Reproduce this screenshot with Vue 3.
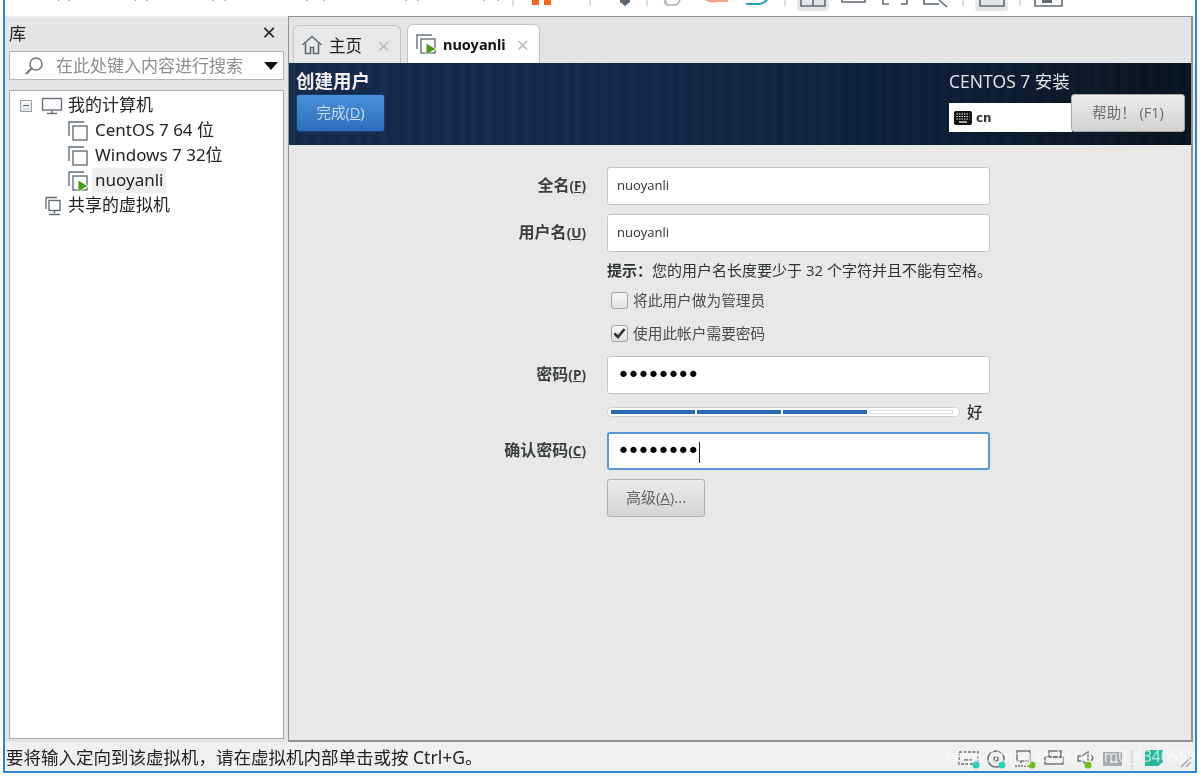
<template>
  <div class="window">
    <div class="toolbar">
      <div class="menus">
        <span v-for="m in menus" :key="m">{{ m }}</span>
      </div>
      <svg class="tools" width="600" height="16" viewBox="0 0 600 16">
        <g stroke="#b9bdc2" stroke-width="1">
          <path d="M18 0v6M95 0v6M152 0v6M290 0v6M468 0v6M525 0v6" />
        </g>
        <rect x="37" y="0" width="7" height="5" fill="#ef6a1f" />
        <rect x="49" y="0" width="7" height="5" fill="#ef6a1f" />
        <path d="M125 0h10v2l-5 4-5-4z" fill="#5b6670" />
        <path d="M170 0v2c0 2 1 3 3 3h6c3 0 5-2 6-5" fill="none" stroke="#a9aeb3" stroke-width="1.5" />
        <path d="M170 0l2 3" stroke="#e8a48a" stroke-width="1.5" />
        <path d="M210 0c2 2 6 3 12 2h11V0z" fill="#f2a484" />
        <path d="M250 3h12c4 0 7-1 8-3h3c-2 3-6 5-11 5h-10z" fill="#22a0c0" />
        <rect x="302" y="0" width="32" height="11" rx="3" fill="#e3e6ea" />
        <path d="M306 0v6h24V0M318 0v6" fill="none" stroke="#5f6b76" stroke-width="1.6" />
        <path d="M347 0v2h23V0" fill="none" stroke="#5f6b76" stroke-width="1.6" />
        <path d="M388 0v4h6M412 0v4h-6" fill="none" stroke="#5f6b76" stroke-width="1.6" />
        <path d="M429 0v4h15M444 0l8 7" fill="none" stroke="#5f6b76" stroke-width="1.6" />
        <rect x="480" y="0" width="33" height="11" rx="3" fill="#e3e6ea" />
        <path d="M485 0v6h24V0" fill="none" stroke="#5f6b76" stroke-width="1.6" />
        <path d="M540 0v6h27V0" fill="none" stroke="#5f6b76" stroke-width="1.6" />
        <rect x="547" y="0" width="10" height="3" fill="#5f6b76" />
      </svg>
    </div>

    <div class="body">
      <aside class="library">
        <div class="lib-head">
          <span>库</span>
          <span class="lib-close">×</span>
        </div>
        <div class="search">
          <svg width="20" height="20" viewBox="0 0 20 20" fill="none" stroke="#6d747b" stroke-width="1.5">
            <circle cx="12" cy="8" r="6" />
            <path d="M7.5 12.5L2 18" stroke-width="2" />
          </svg>
          <span class="search-text">在此处键入内容进行搜索</span>
          <span class="search-arrow"></span>
        </div>
        <div class="tree">
          <div class="tree-row">
            <span class="collapse"></span>
            <svg class="pc" width="22" height="18" viewBox="0 0 22 18" fill="none" stroke="#66707a" stroke-width="1.4">
              <rect x="1.5" y="1.5" width="19" height="11.5" />
              <path d="M11 13v3M6 16.5h10" />
            </svg>
            <span class="zh">我的计算机</span>
          </div>
          <div v-for="vm in vms" :key="vm.name" class="tree-row vm-row">
            <svg width="22" height="22" viewBox="0 0 22 22" fill="none" stroke="#66707a" stroke-width="1.4">
              <path d="M2 16V2h15" />
              <rect x="6" y="6" width="14" height="14" />
              <path v-if="vm.running" d="M11 10l10 6-10 6z" fill="#4a9a1e" stroke="#fff" stroke-width=".8" />
            </svg>
            <span :class="{ selected: vm.running }">{{ vm.name }}</span>
          </div>
          <div class="tree-row">
            <svg class="shared" width="18" height="20" viewBox="0 0 18 20" fill="none" stroke="#66707a" stroke-width="1.4">
              <path d="M2 13V1.5h11" />
              <rect x="5" y="4.5" width="11" height="10" />
              <path d="M10.500 14.500v3M5 18.500h11" />
            </svg>
            <span class="zh">共享的虚拟机</span>
          </div>
        </div>
      </aside>

      <main class="main">
        <div class="tabs">
          <div class="tab">
            <svg width="22" height="20" viewBox="0 0 22 20" fill="none" stroke="#606b75" stroke-width="1.6">
              <path d="M1.500 10L11 1.500 20.500 10" />
              <path d="M4.500 8v10.500h5v-6h3v6h5V8" />
            </svg>
            <span class="tab-name">主页</span>
            <span class="tab-close">×</span>
          </div>
          <div class="tab active">
            <svg width="22" height="22" viewBox="0 0 22 22" fill="none" stroke="#66707a" stroke-width="1.4">
              <path d="M2 16V2h15" />
              <rect x="6" y="6" width="14" height="14" />
              <path d="M11 10l10 6-10 6z" fill="#4a9a1e" stroke="#fff" stroke-width=".8" />
            </svg>
            <span class="tab-name bold">nuoyanli</span>
            <span class="tab-close">×</span>
          </div>
        </div>

        <div class="vm-screen">
          <header class="anaconda">
            <div class="hd-left">
              <div class="hd-title">创建用户</div>
              <button class="done">完成(<u>D</u>)</button>
            </div>
            <div class="hd-right">
              <div class="hd-product">CENTOS 7 安装</div>
              <div class="hd-controls">
                <div class="kb">
                  <svg width="18" height="14" viewBox="0 0 18 14">
                    <rect width="18" height="14" rx="2" fill="#111" />
                    <path d="M2.500 3h13M2.500 5.500h13M2.500 8h13" stroke="#eee" stroke-width="1.200" stroke-dasharray="1.500 1" />
                    <path d="M5 11h8" stroke="#eee" stroke-width="1.400" />
                  </svg>
                  <span>cn</span>
                </div>
                <button class="help">帮助！ (F1)</button>
              </div>
            </div>
          </header>

          <form class="form" @submit.prevent>
            <label class="lbl">全名<span class="mn">(<u>F</u>)</span></label>
            <div class="field">nuoyanli</div>

            <label class="lbl mt10">用户名<span class="mn">(<u>U</u>)</span></label>
            <div class="field mt10">nuoyanli</div>

            <div class="hint"><b>提示：</b>您的用户名长度要少于 32 个字符并且不能有空格。</div>

            <div class="check first">
              <span class="box"></span>
              <span>将此用户做为管理员</span>
            </div>
            <div class="check second">
              <span class="box">
                <svg width="15" height="15" viewBox="0 0 15 15" fill="none" stroke="#2e3436" stroke-width="2.600">
                  <path d="M2.500 7.500l3.500 3.500 6.500-8" />
                </svg>
              </span>
              <span>使用此帐户需要密码</span>
            </div>

            <label class="lbl pw-top">密码<span class="mn">(<u>P</u>)</span></label>
            <div class="field dots pw-top">••••••••</div>

            <div class="strength">
              <div class="track">
                <span v-for="n in 4" :key="n" class="seg" :class="{ on: n < 4 }"></span>
              </div>
              <span class="strength-text">好</span>
            </div>

            <label class="lbl confirm-top">确认密码<span class="mn">(<u>C</u>)</span></label>
            <div class="field dots focus confirm-top">••••••••<i class="caret"></i></div>

            <button class="advanced">高级(<u>A</u>)...</button>
          </form>
        </div>
      </main>
    </div>

    <footer class="status">
      <span class="status-text">要将输入定向到该虚拟机，请在虚拟机内部单击或按 Ctrl+G。</span>
      <svg class="tray" width="240" height="24" viewBox="0 0 240 24" fill="none" stroke="#656e76" stroke-width="1.400">
        <rect x="4" y="4" width="19" height="12" stroke-dasharray="3 1.500" />
        <path d="M8 12h9" />
        <circle cx="21" cy="17" r="3.500" fill="#2fd3b8" stroke="none" />
        <circle cx="41" cy="11" r="8" />
        <circle cx="41" cy="11" r="2" />
        <circle cx="47" cy="17" r="3.500" fill="#2fd3b8" stroke="none" />
        <rect x="62" y="3" width="13" height="10" />
        <path d="M66 13v3M60 18h16" stroke-dasharray="2 1" />
        <circle cx="77" cy="17" r="3.500" fill="#6cc11e" stroke="none" />
        <rect x="94" y="3" width="12" height="6" />
        <rect x="90" y="9" width="18" height="7" />
        <path d="M123 8h4l6-4v13l-6-4h-4z" />
        <path d="M136 7l2 3-2 3" />
        <circle cx="133" cy="17" r="3.500" fill="#6cc11e" stroke="none" />
        <rect x="148" y="4" width="19" height="14" fill="#a4abb2" stroke="none" />
        <path d="M155 14h8" stroke="#eee" />
        <path d="M177 2v20" stroke="#c4c7ca" stroke-width="1" />
        <path d="M190 2h18v12l-5 4h-13z" fill="#25b89f" stroke="none" />
        <path d="M226 19l10-10M231 19l5-5" stroke="#a3a7aa" stroke-width="1.500" />
      </svg>
      <span class="watermark">https://blog.csdn.net/m0_43405589</span>
    </footer>
  </div>
</template>

<script setup>
const menus = ['文件(F)', '编辑(E)', '查看(V)', '虚拟机(M)', '选项卡(T)', '帮助(H)']

const vms = [
  { name: 'CentOS 7 64 位', running: false },
  { name: 'Windows 7 32位', running: false },
  { name: 'nuoyanli', running: true },
]
</script>

<style>
html, body {
  margin: 0;
  background: #fff;
}
</style>

<style scoped>
.window {
  box-sizing: border-box;
  width: 1194px;
  height: 773px;
  margin-left: 3px;
  border: 2px solid #2f86d6;
  border-top: none;
  display: flex;
  flex-direction: column;
  background: #f0f0f0;
  overflow: hidden;
  font-family: "Noto Sans", "Noto Sans CJK SC", sans-serif;
  color: #222;
  filter: blur(0.35px);
}

/* top of the window is cut off, only the bottom edge of the toolbar shows */
.toolbar {
  height: 16px;
  flex: none;
  background: #fff;
  display: flex;
  overflow: hidden;
}

.menus {
  width: 470px;
  flex: none;
  display: flex;
  gap: 27px;
  margin: -20px 0 0 18px;
  font-size: 16px;
  line-height: 24px;
  height: 24px;
  color: #333;
  white-space: nowrap;
}

.tools {
  margin-left: auto;
  margin-right: 100px;
  flex: none;
}

.body {
  flex: 1;
  min-height: 0;
  display: flex;
}

.library {
  width: 283px;
  flex: none;
  background: #e4e5e7;
  border-top: 1px solid #ececec;
  padding: 0 4px 3px 4px;
  box-sizing: border-box;
  display: flex;
  flex-direction: column;
}

.lib-head {
  height: 34px;
  flex: none;
  box-sizing: border-box;
  padding-bottom: 4px;
  display: flex;
  justify-content: space-between;
  align-items: center;
  font-size: 17px;
  padding-right: 8px;
}

.lib-close {
  font-size: 24px;
  line-height: 1;
  color: #222;
}

.search {
  height: 29px;
  flex: none;
  box-sizing: border-box;
  background: #fff;
  border: 1px solid #b4b6b8;
  display: flex;
  align-items: center;
  padding: 0 5px 0 14px;
  margin-right: 0;
}

.search-text {
  margin: 0 0 2px 12px;
  font-size: 17px;
  color: #8a8f94;
  flex: 1;
  white-space: nowrap;
}

.search-arrow {
  width: 0;
  height: 0;
  border-left: 7px solid transparent;
  border-right: 7px solid transparent;
  border-top: 8px solid #111;
}

.tree {
  flex: 1;
  margin-top: 10px;
  box-sizing: border-box;
  background: #fff;
  border: 1.500px solid #a9acae;
  padding: 2px 0 0 10px;
}

.tree-row {
  height: 25px;
  display: flex;
  align-items: center;
  font-size: 17px;
  white-space: nowrap;
}

.zh {
  margin-bottom: 4px;
}

.collapse {
  width: 10px;
  height: 10px;
  border: 1px solid #9aa0a6;
  background: linear-gradient(#fafafa, #dfe3e6);
  position: relative;
  margin-right: 9px;
}

.collapse::after {
  content: "";
  position: absolute;
  left: 2px;
  right: 2px;
  top: 4.500px;
  height: 1px;
  background: #4c6a92;
}

.pc {
  margin-right: 5px;
}

.vm-row {
  padding-left: 47px;
}

.vm-row svg {
  flex: none;
  margin-right: 3px;
}

.vm-row span {
  padding: 0 3px 2px;
  line-height: 23px;
}

.selected {
  background: #efefef;
}

.shared {
  margin: 0 6px 0 24px;
}

.main {
  width: 905px;
  flex: none;
  margin-left: 0;
  box-sizing: border-box;
  border: 1.500px solid #8f9192;
  border-right-width: 2px;
  border-bottom-width: 2px;
  background: #e3e4e6;
  display: flex;
  flex-direction: column;
}

.tabs {
  height: 46px;
  flex: none;
  display: flex;
  align-items: flex-end;
  gap: 6px;
  padding-left: 4px;
}

.tab {
  height: 38px;
  box-sizing: border-box;
  width: 108px;
  background: #e7e8ea;
  border: 1px solid #c2c4c6;
  border-bottom: none;
  border-radius: 6px 6px 0 0;
  display: flex;
  align-items: center;
  padding: 0 10px 0 7px;
  font-size: 16.500px;
}

.tab.active {
  width: 133px;
  height: 39px;
  background: #fff;
}

.tab-name {
  margin-left: 6px;
  flex: 1;
}

.bold {
  font-weight: 700;
  font-size: 14.500px;
  color: #111;
}

.tab-close {
  font-size: 22px;
  line-height: 1;
  color: #b9bcbf;
}

.vm-screen {
  flex: 1;
  background: #e8e8e7;
  display: flex;
  flex-direction: column;
  font-family: "Open Sans", "Noto Sans CJK SC", sans-serif;
}

.anaconda {
  height: 82px;
  flex: none;
  box-sizing: border-box;
  display: flex;
  justify-content: space-between;
  padding: 7px 6px 0 7px;
  background:
    repeating-linear-gradient(90deg, rgba(255, 255, 255, 0.01) 0 7px, rgba(0, 0, 0, 0.02) 7px 13px),
    linear-gradient(90deg, #15294a 0%, #132a4e 25%, #0f2645 50%, #0d1f38 70%, #0a1a2b 85%, #07141d 100%);
}

.hd-title {
  height: 24px;
  color: #f2f2f2;
  font-size: 18.500px;
  font-weight: 700;
  line-height: 22px;
  white-space: nowrap;
}

.done {
  display: block;
  width: 89px;
  height: 38px;
  margin-top: 0;
  padding: 0 0 3px;
  border: 1px solid #14406f;
  border-radius: 3px;
  background: linear-gradient(#4a90da, #2a6ebd);
  color: #c9dcf0;
  font: inherit;
  font-size: 14.500px;
}

.hd-right {
  width: 236px;
  display: flex;
  flex-direction: column;
}

.hd-product {
  height: 24px;
  color: #e8e8e8;
  font-size: 17.500px;
  line-height: 22px;
  white-space: nowrap;
}

.hd-controls {
  display: flex;
  align-items: flex-end;
}

.kb {
  width: 123px;
  height: 29px;
  flex: none;
  box-sizing: border-box;
  background: #fff;
  display: flex;
  align-items: center;
  gap: 4px;
  padding-left: 5px;
  font-family: "DejaVu Sans", sans-serif;
  font-weight: 700;
  font-size: 12px;
  color: #2e3436;
}

.help {
  width: 114px;
  height: 38px;
  flex: none;
  margin-left: -1px;
  padding: 0 0 3px;
  border: 1px solid #a8a8a8;
  border-radius: 3px;
  background: linear-gradient(#ececeb, #d3d3d1);
  color: #6b6f72;
  font: inherit;
  font-size: 14.500px;
}

.form {
  display: grid;
  grid-template-columns: 297px 383px;
  column-gap: 21px;
  padding-top: 22px;
  align-items: center;
  color: #2e3436;
}

.lbl {
  justify-self: end;
  padding-bottom: 4px;
  font-weight: 700;
  font-size: 16px;
  color: #3a3f42;
}

.mn {
  font-size: 13.500px;
}

.field {
  height: 38px;
  box-sizing: border-box;
  background: #fff;
  border: 1px solid #c5c5c3;
  border-radius: 3px;
  padding-left: 9px;
  font-size: 13px;
  line-height: 34px;
  color: #2e3436;
}

.mt10 {
  margin-top: 9px;
}

.hint {
  grid-column: 2;
  height: 22px;
  margin-top: 8px;
  font-size: 15px;
  line-height: 20px;
  white-space: nowrap;
}

.check {
  grid-column: 2;
  height: 18px;
  display: flex;
  align-items: center;
  gap: 5px;
  padding-left: 4px;
  font-size: 14.700px;
  color: #4a4e51;
}

.check.first {
  margin-top: 9px;
}

.check.second {
  margin-top: 15px;
}

.check span:last-child {
  line-height: 16px;
}

.box {
  width: 17px;
  height: 17px;
  box-sizing: border-box;
  border: 1px solid #a4a4a2;
  border-radius: 3px;
  background: linear-gradient(#f6f6f5, #e2e2e0);
  display: flex;
  align-items: center;
  justify-content: center;
}

.pw-top {
  margin-top: 14px;
}

.dots {
  padding-left: 9px;
  font-family: "DejaVu Sans", sans-serif;
  font-size: 22px;
  line-height: 36px;
  letter-spacing: -3px;
  color: #000;
}

.strength {
  grid-column: 2;
  display: flex;
  align-items: center;
  margin-top: 13px;
  height: 10px;
}

.track {
  width: 353px;
  height: 10px;
  flex: none;
  box-sizing: border-box;
  background: #fff;
  border: 1px solid #d0d0ce;
  border-radius: 4px;
  display: flex;
  gap: 2px;
  padding: 2px 6px 2px 3px;
}

.seg {
  flex: 1;
  height: 4px;
  background: #fff;
  border: 1px solid #dcdcdc;
  box-sizing: border-box;
}

.seg.on {
  background: #2e6cb3;
  border-color: #2a66ad;
}

.strength-text {
  margin-left: 7px;
  font-size: 15.500px;
  font-weight: 500;
  line-height: 10px;
}

.confirm-top {
  margin-top: 15px;
}

.focus {
  border: 2px solid #5b98d8;
  line-height: 34px;
  padding-left: 8px;
}

.caret {
  display: inline-block;
  width: 1px;
  height: 21px;
  background: #222;
  vertical-align: middle;
  margin-left: 2px;
}

.advanced {
  grid-column: 2;
  justify-self: start;
  width: 98px;
  height: 38px;
  margin-top: 9px;
  padding: 0 0 3px;
  border: 1px solid #b0b0ae;
  border-radius: 3px;
  background: linear-gradient(#ececeb, #d4d4d2);
  color: #5f6366;
  font: inherit;
  font-size: 15px;
}

.status {
  height: 29px;
  flex: none;
  position: relative;
  display: flex;
  align-items: center;
  background: #f0f0f0;
  font-size: 17.500px;
}

.status-text {
  margin-left: 1px;
  white-space: nowrap;
}

.tray {
  margin-left: auto;
  margin-top: 6px;
}

.watermark {
  position: absolute;
  left: 941px;
  top: 3px;
  font-size: 15.500px;
  color: rgba(255, 255, 255, 0.7);
  white-space: nowrap;
}
</style>
